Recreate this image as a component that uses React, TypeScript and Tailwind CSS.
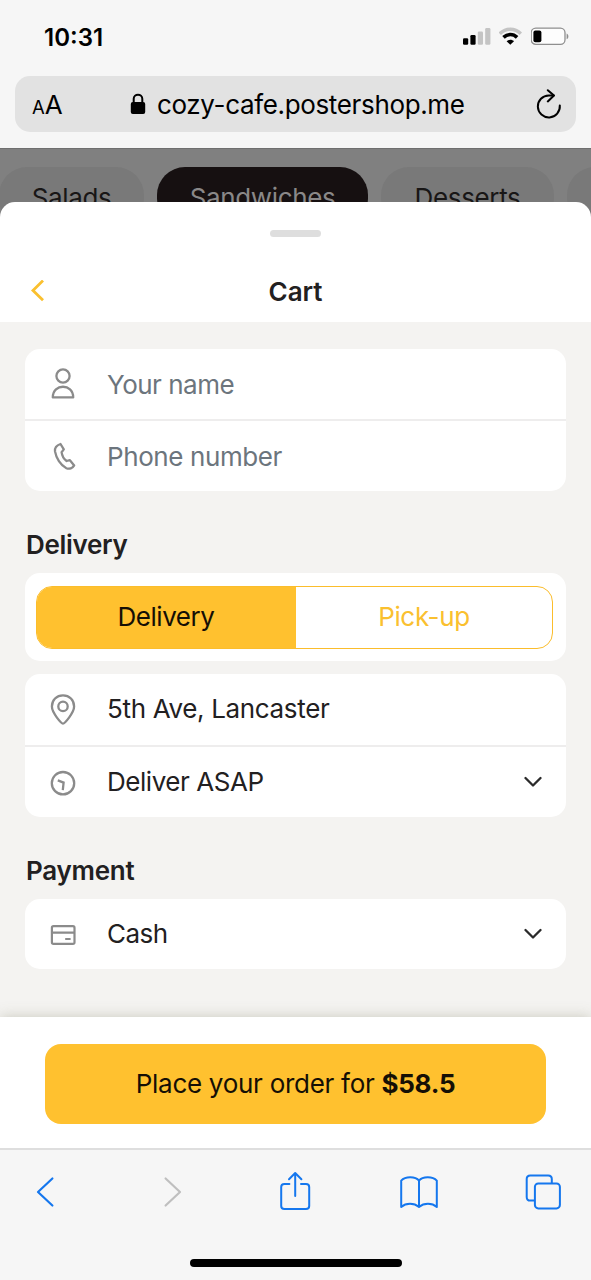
import { useState } from "react";
import type { ReactNode } from "react";

const categories = [
  { name: "Salads", active: false, className: "w-[145px] -ml-px" },
  { name: "Sandwiches", active: true, className: "w-[211px]" },
  { name: "Desserts", active: false, className: "w-[173px]" },
  { name: "", active: false, className: "w-[145px]" },
];

const StatusBar = () => {
  return (
    <div className="flex h-[76px] items-start justify-between pl-[44px] pr-[21px]">
      <span className="mt-[23px] text-[24px] leading-[29px] font-semibold text-black">
        10:31
      </span>
      <div className="mt-[27px] flex items-start gap-[8px]">
        <svg width="28" height="18" viewBox="0 0 28 18">
          <rect x="0" y="11.3" width="5.2" height="6.5" rx="1.2" fill="#000" />
          <rect x="7.4" y="8" width="5.2" height="9.8" rx="1.2" fill="#000" />
          <rect x="14.8" y="4.6" width="5.2" height="13.2" rx="1.2" fill="#c4c4c4" />
          <rect x="22.2" y="1" width="5.2" height="16.8" rx="1.2" fill="#c4c4c4" />
        </svg>
        <svg width="24" height="18" viewBox="0 0 24 18" fill="none">
          <path d="M0.8 6.7C6.8 0.7 15.8 0.7 21.8 6.7" stroke="#c4c4c4" strokeWidth="3.4" />
          <path d="M4.5 10.4C8.4 6.6 14.2 6.6 18.1 10.4" stroke="#000" strokeWidth="3.6" />
          <path d="M11.3 17.8L7.6 14.2C9.6 12.2 13 12.2 15 14.2Z" fill="#000" />
        </svg>
        <svg width="39" height="19" viewBox="0 0 39 19">
          <rect x="0.2" y="1.2" width="33.8" height="16.2" rx="4.6" fill="#fdfdfd" stroke="#8f8f8f" strokeWidth="1.3" />
          <rect x="2.4" y="3.4" width="8" height="11.8" rx="2" fill="#000" />
          <path d="M35.6 6.4C38 7.2 38 11.4 35.6 12.2Z" fill="#8f8f8f" />
        </svg>
      </div>
    </div>
  );
};

const AddressBar = () => {
  return (
    <div className="mx-[15px] flex h-[56px] items-center rounded-[15px] bg-[#e2e2e2] pl-[17px] pr-[14px] text-black">
      <div className="flex w-[98px] items-baseline pt-[3px]">
        <span className="text-[18.5px] leading-[30px]">A</span>
        <span className="text-[26px] leading-[30px]">A</span>
      </div>
      <svg width="16" height="22" viewBox="0 0 16 22" className="mr-[11px] shrink-0">
        <path d="M3.7 10V5.8C3.7 0.4 12.3 0.4 12.3 5.8V10" fill="none" stroke="#000" strokeWidth="2" />
        <rect x="0.8" y="9" width="14.4" height="12" rx="2" fill="#000" />
      </svg>
      <span className="flex-1 pt-px text-[26px] leading-[32px] tracking-[-0.35px] whitespace-nowrap">
        cozy-cafe.postershop.me
      </span>
      <svg width="26" height="30" viewBox="0 0 26 30" fill="none" stroke="#000" strokeWidth="2">
        <path d="M23.8 16.4A11 11 0 1 1 12.8 6.4H17.5" strokeLinecap="round" />
        <path d="M11.8 1.2L18 6.6L11.8 12.4" strokeLinecap="round" strokeLinejoin="round" />
      </svg>
    </div>
  );
};

const Row = ({ icon, children, arrow, divided }: { icon: ReactNode; children: ReactNode; arrow?: boolean; divided?: boolean }) => {
  return (
    <div
      className={`flex flex-1 items-center pl-[22px] pr-[24px] text-[26px] leading-[34px] ${
        divided ? "border-b-2 border-[#eeeded]" : ""
      }`}
    >
      <div className="flex w-[60px] shrink-0">{icon}</div>
      <div className="min-w-0 flex-1">{children}</div>
      {arrow && (
        <svg width="18" height="12" viewBox="0 0 18 12" fill="none" stroke="#2b2b2b" strokeWidth="2.3" strokeLinecap="round" strokeLinejoin="round">
          <path d="M1.5 2L9 9.5L16.5 2" />
        </svg>
      )}
    </div>
  );
};

const UserIcon = () => (
  <svg width="32" height="34" viewBox="0 0 32 34" fill="none" stroke="#8b8b8b" strokeWidth="2.3">
    <circle cx="16" cy="9" r="6.6" />
    <path d="M5.8 30.4C5.8 16.2 26.2 16.2 26.2 30.4Z" strokeLinejoin="round" />
  </svg>
);

const PhoneIcon = () => (
  <svg width="32" height="34" viewBox="0 0 32 34" fill="none" stroke="#8b8b8b" strokeWidth="2.3" strokeLinejoin="round">
    <path d="M13.5 5L16.8 10.4L14.6 13.2C15 16.6 17 20.2 19.6 22L22.9 21.2L27.2 26.4C25.6 29.2 22.4 30.4 19.4 29.2C13.4 26.4 9.2 19 8 12.4C7.6 9 9.8 6.2 13.5 5Z" />
  </svg>
);

const PinIcon = () => (
  <svg width="32" height="34" viewBox="0 0 32 34" fill="none" stroke="#8b8b8b" strokeWidth="2.3">
    <path d="M16 31.6C14.2 31.6 4.9 20.6 4.9 14.6C4.9 8 9.6 3.4 16 3.4C22.4 3.4 27.1 8 27.1 14.6C27.1 20.6 17.8 31.6 16 31.6Z" />
    <circle cx="16" cy="14.4" r="4.7" />
  </svg>
);

const ClockIcon = () => (
  <svg width="32" height="34" viewBox="0 0 32 34" fill="none" stroke="#8b8b8b" strokeWidth="2.3">
    <circle cx="16" cy="18.2" r="11.2" />
    <path d="M10.8 15.4L16.6 17.6L15.8 25.2" />
  </svg>
);

const CardIcon = () => (
  <svg width="32" height="34" viewBox="0 0 32 34" fill="none" stroke="#8b8b8b" strokeWidth="2.2">
    <rect x="4.9" y="9.2" width="22.6" height="17.6" rx="1.6" />
    <path d="M4.9 15.6H27.5M18.2 22H23.6" />
  </svg>
);

const App = () => {
  const [formData, setFormData] = useState({ name: "", phone: "" });
  const [method, setMethod] = useState("delivery");

  const handleChange = (e: { target: { name: string; value: string } }) => {
    setFormData({
      ...formData,
      [e.target.name]: e.target.value,
    });
  };

  return (
    <div className="flex h-[1280px] w-[591px] flex-col overflow-hidden bg-[#f6f6f6] font-['Inter',sans-serif] text-[#222021]">
      {/* browser top */}
      <header className="h-[148px] shrink-0">
        <StatusBar />
        <AddressBar />
      </header>

      {/* dimmed menu */}
      <div className="flex h-[79px] shrink-0 gap-[13px] overflow-hidden border-t border-[#6f6f6f] bg-[#808080] pt-[18px]">
        {categories.map((item, i) => (
          <div
            key={i}
            className={`flex h-[60px] shrink-0 items-center justify-center rounded-[28px] pt-px text-[26px] tracking-[-0.35px] ${item.className} ${
              item.active ? "bg-[#161011] text-[#8a8888]" : "bg-[#797979] text-[#181616]"
            }`}
          >
            {item.name}
          </div>
        ))}
      </div>

      <section className="z-10 -mt-[25px] flex h-[946px] shrink-0 flex-col overflow-hidden rounded-t-[15px] bg-white">
        <div className="h-[120px] shrink-0">
          <div className="mx-auto mt-[28px] h-[7px] w-[51px] rounded-full bg-[#dedede]" />
          <div className="mt-[34px] flex h-[42px] items-center pl-[30px] pr-[45px]">
            <svg width="15" height="24" viewBox="0 0 15 24" fill="none" stroke="#fac02f" strokeWidth="2.8">
              <path d="M13 0.6L3 10.4L13 20.2" />
            </svg>
            <h1 className="flex-1 text-center text-[26px] leading-[34px] font-semibold">Cart</h1>
          </div>
        </div>

        <main className="flex h-[695px] shrink-0 flex-col bg-[#f4f3f1] px-[25px] pt-[27px]">
          <div className="flex h-[142px] shrink-0 flex-col overflow-hidden rounded-[15px] bg-white">
            <Row icon={<UserIcon />} divided>
              <input
                name="name"
                placeholder="Your name"
                value={formData.name}
                onChange={handleChange}
                className="w-full pt-0.5 tracking-[-0.5px] outline-none placeholder:text-[#6c757d]"
              />
            </Row>
            <Row icon={<PhoneIcon />}>
              <input
                name="phone"
                placeholder="Phone number"
                value={formData.phone}
                onChange={handleChange}
                className="w-full pt-0.5 tracking-[-0.4px] outline-none placeholder:text-[#6c757d]"
              />
            </Row>
          </div>

          <h2 className="mt-[37px] pl-px text-[26px] leading-[34px] font-semibold tracking-[-0.3px]">Delivery</h2>
          <div className="mt-[11px] h-[88px] shrink-0 rounded-[15px] bg-white pt-[13px] pr-[13px] pb-[12px] pl-[11px]">
            <div className="flex h-full overflow-hidden rounded-[16px] border border-[#fbbd2c] text-[26px]">
              <button
                onClick={() => setMethod("delivery")}
                className={`w-[259px] pr-px pb-[3px] tracking-[-0.45px] ${method === "delivery" ? "bg-[#ffc12f] text-[#150f05]" : "text-[#fac02f]"}`}
              >
                Delivery
              </button>
              <button
                onClick={() => setMethod("pickup")}
                className={`flex-1 pb-[3px] tracking-[-0.35px] ${method === "pickup" ? "bg-[#ffc12f] text-[#150f05]" : "text-[#fac02f]"}`}
              >
                Pick-up
              </button>
            </div>
          </div>

          <div className="mt-[13px] flex h-[143px] shrink-0 flex-col overflow-hidden rounded-[15px] bg-white">
            <Row icon={<PinIcon />} divided>
              <span className="tracking-[-0.34px]">5th Ave, Lancaster</span>
            </Row>
            <Row icon={<ClockIcon />} arrow>
              <span className="tracking-[-0.45px]">Deliver ASAP</span>
            </Row>
          </div>

          <h2 className="mt-[37px] pl-px text-[26px] leading-[34px] font-semibold tracking-[-0.25px]">Payment</h2>
          <div className="mt-[11px] flex h-[70px] shrink-0 rounded-[15px] bg-white">
            <Row icon={<CardIcon />} arrow>
              <span className="tracking-[-0.5px]">Cash</span>
            </Row>
          </div>
        </main>

        <div className="h-[131px] shrink-0 bg-white px-[45px] pt-[27px] shadow-[0_0_13px_rgba(120,120,90,0.34)]">
          <button className="h-[80px] w-full rounded-[16px] bg-[#ffc12f] pb-[2px] text-[26px] tracking-[-0.28px] text-[#150f05]">
            Place your order for <b>$58.5</b>
          </button>
        </div>
      </section>

      {/* browser toolbar */}
      <footer className="flex h-[132px] shrink-0 flex-col items-center border-t-2 border-[#dedede] bg-[#f6f6f6]">
        <div className="flex h-[84px] w-full items-center pl-[35px]">
          <svg className="mr-[109px]" width="20" height="32" viewBox="0 0 20 32" fill="none" stroke="#1577ee" strokeWidth="2.2" strokeLinecap="round" strokeLinejoin="round">
            <path d="M17.4 2.5L3 16L17.4 29.5" />
          </svg>
          <svg className="mr-[95px]" width="20" height="32" viewBox="0 0 20 32" fill="none" stroke="#bfbfbf" strokeWidth="2.2" strokeLinecap="round" strokeLinejoin="round">
            <path d="M1.6 2.5L16 16L1.6 29.5" />
          </svg>
          <svg className="mr-[88px] mb-[3px]" width="32" height="40" viewBox="0 0 32 40" fill="none" stroke="#1577ee" strokeWidth="2" strokeLinecap="round" strokeLinejoin="round">
            <path d="M10.4 13H5.4Q2.2 13 2.2 16V35Q2.2 38 5.4 38H27Q30.2 38 30.2 35V16Q30.2 13 27 13H22" />
            <path d="M16.2 25V2.2M10 8.2L16.2 2L22.4 8.2" />
          </svg>
          <svg className="mr-[86px]" width="40" height="36" viewBox="0 0 40 36" fill="none" stroke="#1577ee" strokeWidth="2" strokeLinejoin="round">
            <path d="M20 6.6C16.4 2.2 6.4 2 2.2 6.6V33C7 28.8 15 28.8 20 33C25 28.8 33 28.8 37.8 33V6.6C33.6 2 23.6 2.2 20 6.6ZM20 6.6V33" />
          </svg>
          <svg width="36" height="36" viewBox="0 0 36 36" fill="none" stroke="#1577ee" strokeWidth="2">
            <rect x="9.9" y="9.4" width="25" height="25" rx="3.4" />
            <path d="M9.9 26.6H5.3Q1.7 26.6 1.7 23V5Q1.7 1.4 5.3 1.4H23.2Q26.8 1.4 26.8 5V9.4" />
          </svg>
        </div>
        <div className="mt-[25px] h-[8px] w-[212px] rounded-full bg-black" />
      </footer>
    </div>
  );
};

export default App;
